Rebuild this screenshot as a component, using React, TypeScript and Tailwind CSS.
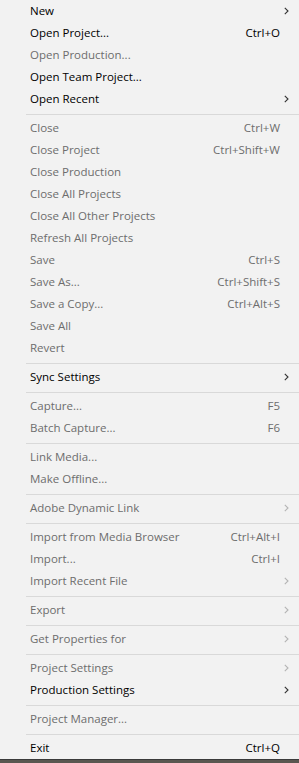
import React from 'react';

type Item =
  | { sep: true }
  | { label: string; key?: string; sub?: boolean; off?: boolean; sep?: false };

const items: Item[] = [
  { label: 'New', sub: true },
  { label: 'Open Project...', key: 'Ctrl+O' },
  { label: 'Open Production...', off: true },
  { label: 'Open Team Project...' },
  { label: 'Open Recent', sub: true },
  { sep: true },
  { label: 'Close', key: 'Ctrl+W', off: true },
  { label: 'Close Project', key: 'Ctrl+Shift+W', off: true },
  { label: 'Close Production', off: true },
  { label: 'Close All Projects', off: true },
  { label: 'Close All Other Projects', off: true },
  { label: 'Refresh All Projects', off: true },
  { label: 'Save', key: 'Ctrl+S', off: true },
  { label: 'Save As...', key: 'Ctrl+Shift+S', off: true },
  { label: 'Save a Copy...', key: 'Ctrl+Alt+S', off: true },
  { label: 'Save All', off: true },
  { label: 'Revert', off: true },
  { sep: true },
  { label: 'Sync Settings', sub: true },
  { sep: true },
  { label: 'Capture...', key: 'F5', off: true },
  { label: 'Batch Capture...', key: 'F6', off: true },
  { sep: true },
  { label: 'Link Media...', off: true },
  { label: 'Make Offline...', off: true },
  { sep: true },
  { label: 'Adobe Dynamic Link', sub: true, off: true },
  { sep: true },
  { label: 'Import from Media Browser', key: 'Ctrl+Alt+I', off: true },
  { label: 'Import...', key: 'Ctrl+I', off: true },
  { label: 'Import Recent File', sub: true, off: true },
  { sep: true },
  { label: 'Export', sub: true, off: true },
  { sep: true },
  { label: 'Get Properties for', sub: true, off: true },
  { sep: true },
  { label: 'Project Settings', sub: true, off: true },
  { label: 'Production Settings', sub: true },
  { sep: true },
  { label: 'Project Manager...', off: true },
  { sep: true },
  { label: 'Exit', key: 'Ctrl+Q' },
];

function Chevron({ off }: { off?: boolean }) {
  return (
    <svg width="5" height="8" viewBox="0 0 5 8" className="absolute right-[10px] top-[7px]">
      <path d="M0.8 0.8 L4 4 L0.8 7.2" fill="none" stroke={off ? '#b4b4b4' : '#333333'} strokeWidth="1.1" />
    </svg>
  );
}

export default function App() {
  return (
    <div
      className="w-[299px] h-[763px] bg-[#f2f2f2] flex flex-col text-[11.5px] overflow-hidden"
      style={{ fontFamily: '"Open Sans", "Noto Sans", sans-serif' }}
    >
      <div className="flex-1">
        {items.map((it, i) =>
          it.sep ? (
            <div key={i} className="ml-[26px] mt-[4px] mb-[2px] h-px bg-[#d9d9d9]" />
          ) : (
            <div
              key={i}
              className={`relative h-[22px] flex items-center pl-[30px] pr-[19px] ${
                it.off ? 'text-[#6d6d6d]' : 'text-black'
              }`}
            >
              <span className="flex-1 whitespace-nowrap">{it.label}</span>
              {it.key && <span className="whitespace-nowrap">{it.key}</span>}
              {it.sub && <Chevron off={it.off} />}
            </div>
          )
        )}
      </div>
      <div className="h-px bg-[#3a3a3a]" />
      <div className="h-[3px] bg-[#5a5750]" />
    </div>
  );
}
